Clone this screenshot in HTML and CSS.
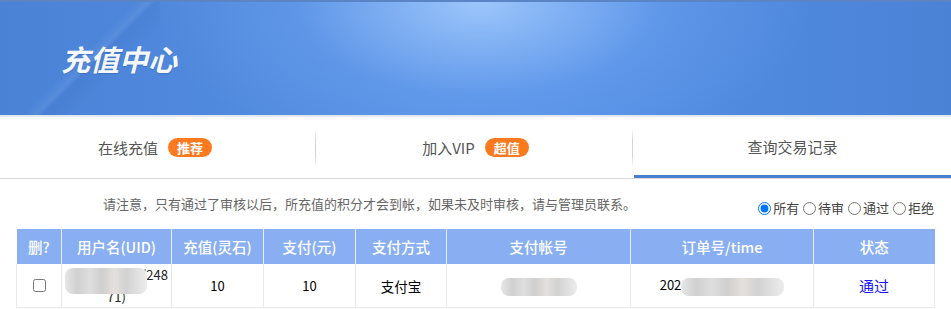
FILE: index.html
```html
<!DOCTYPE html>
<html>
<head>
  <meta charset="utf-8">
  <link rel="stylesheet" href="styles.css">
</head>
<body>

  <div id="banner">
    <div id="banner-shine"></div>
    <h1 id="banner-title">充值中心</h1>
  </div>

  <div id="tabs">
    <div class="tab">在线充值 <span class="badge">推荐</span></div>
    <div class="tab">加入VIP <span class="badge">超值</span></div>
    <div class="tab active">查询交易记录</div>
  </div>

  <div id="content">
    <div id="notice-bar">
      <div id="notice">请注意，只有通过了审核以后，所充值的积分才会到帐，如果未及时审核，请与管理员联系。</div>
      <div id="filter">
        <label><input type="radio" name="state" checked>所有</label>
        <label><input type="radio" name="state">待审</label>
        <label><input type="radio" name="state">通过</label>
        <label><input type="radio" name="state">拒绝</label>
      </div>
    </div>

    <table id="records">
      <colgroup>
        <col style="width:45px">
        <col style="width:110px">
        <col style="width:92px">
        <col style="width:92px">
        <col style="width:91px">
        <col style="width:184px">
        <col style="width:183px">
        <col style="width:121px">
      </colgroup>
      <thead>
        <tr>
          <th>删?</th>
          <th>用户名(UID)</th>
          <th>充值(灵石)</th>
          <th>支付(元)</th>
          <th>支付方式</th>
          <th>支付帐号</th>
          <th>订单号/time</th>
          <th>状态</th>
        </tr>
      </thead>
      <tbody>
        <tr>
          <td><input type="checkbox"></td>
          <td class="user"><span class="blur blur-user"></span>(248<br>71)</td>
          <td>10</td>
          <td>10</td>
          <td class="method">支付宝</td>
          <td><span class="blur blur-account"></span></td>
          <td>202<span class="blur blur-order"></span></td>
          <td><a class="state" href="#">通过</a></td>
        </tr>
      </tbody>
    </table>
  </div>

</body>
</html>
```

FILE: styles.css
```css
body {
  margin: 0;
  background: white;
  font-family: "Noto Sans CJK SC", "Noto Sans", sans-serif;
  color: #333;
}
#banner {
  position: relative;
  height: 117px;
  overflow: hidden;
  border-top: 2px solid #5a84c4;
  border-bottom: 2px solid #e3e8ef;
  box-sizing: border-box;
  background:
    radial-gradient(ellipse 330px 170px at 480px 0px, rgba(160, 200, 252, 0.95), rgba(120, 170, 245, 0.35) 55%, rgba(90, 145, 230, 0) 100%),
    linear-gradient(90deg, #4a82d6 0%, #5590e4 45%, #5490e6 60%, #4a82d6 100%);
}
#banner-shine {
  position: absolute;
  left: 20px;
  top: 0;
  width: 140px;
  height: 117px;
  background: linear-gradient(135deg, rgba(255, 255, 255, 0) 45%, rgba(255, 255, 255, 0.07) 50%, rgba(30, 70, 160, 0.08) 53%, rgba(30, 70, 160, 0) 65%);
}
#banner-title {
  position: relative;
  margin: 0;
  padding: 34px 0 0 61px;
  color: #f4f7fb;
  font-size: 29px;
  font-weight: 700;
  font-style: italic;
  line-height: 44px;
  text-shadow: 0 1px 1px rgba(30, 60, 120, 0.25);
}
#tabs {
  display: grid;
  grid-template-columns: 317px 317px 317px;
  height: 61px;
  border-bottom: 1px solid #dcdcdc;
}
.tab {
  position: relative;
  display: flex;
  align-items: center;
  justify-content: center;
  gap: 10px;
  font-size: 15px;
  color: #555;
  box-sizing: border-box;
}
.tab + .tab::before {
  content: "";
  position: absolute;
  left: -2px;
  top: 11px;
  height: 40px;
  width: 1px;
  background: linear-gradient(#fff, #d4d4d4 30%, #d4d4d4 70%, #fff);
}
.tab:first-child {
  padding-right: 7px;
}
.tab.active {
  border-bottom: 3px solid #4a7fcf;
  padding-top: 1px;
}
.badge {
  display: inline-block;
  padding: 0 9px;
  height: 19px;
  line-height: 19px;
  border-radius: 10px;
  background: #fb7a1f;
  color: white;
  font-size: 13px;
  font-weight: 700;
}
#content {
  padding: 0 17px 0 16px;
}
#notice-bar {
  display: flex;
  justify-content: space-between;
  align-items: flex-start;
  height: 50px;
}
#notice {
  padding: 15px 0 0 87px;
  font-size: 13px;
  color: #666;
  line-height: 20px;
}
#filter {
  padding-top: 20px;
  font-size: 13px;
  color: #444;
  line-height: 18px;
}
#filter label {
  margin-left: 1px;
}
#filter input {
  margin: 0 2px 0 0;
  width: 13px;
  height: 13px;
  vertical-align: -2px;
}
#records {
  width: 918px;
  border-collapse: collapse;
  table-layout: fixed;
  font-size: 13px;
}
#records th {
  height: 35px;
  padding: 0;
  background: #89aff2;
  color: white;
  font-size: 14.5px;
  font-weight: 500;
  border-left: 1px solid #e6eefc;
}
#records th:first-child {
  border-left: none;
}
#records td {
  height: 40px;
  padding: 0;
  text-align: center;
  color: #000;
  border: 1px solid #e8e8e8;
  border-top: none;
}
#records td input {
  width: 13px;
  height: 13px;
  margin: 4px 0 0 0;
}
#records td.user {
  line-height: 21px;
  padding: 0;
  color: #222;
}
#records td.method {
  font-size: 13.5px;
}
.blur {
  display: inline-block;
  vertical-align: middle;
  border-radius: 8px;
  filter: blur(0.6px);
  background:
    linear-gradient(90deg, #e6e6e6 0%, #d0d0d0 15%, #dedede 30%, #cfcfcf 45%, #e4e0dc 60%, #d2d2d2 75%, #e2e2e2 90%, #ececec 100%);
}
.blur-user {
  width: 82px;
  height: 26px;
  margin: 4px -5px -8px 0;
  vertical-align: top;
}
.blur-account {
  width: 76px;
  height: 18px;
}
.blur-order {
  width: 103px;
  height: 18px;
}
.state {
  color: #1414ff;
  font-size: 15px;
  text-decoration: none;
}
```
